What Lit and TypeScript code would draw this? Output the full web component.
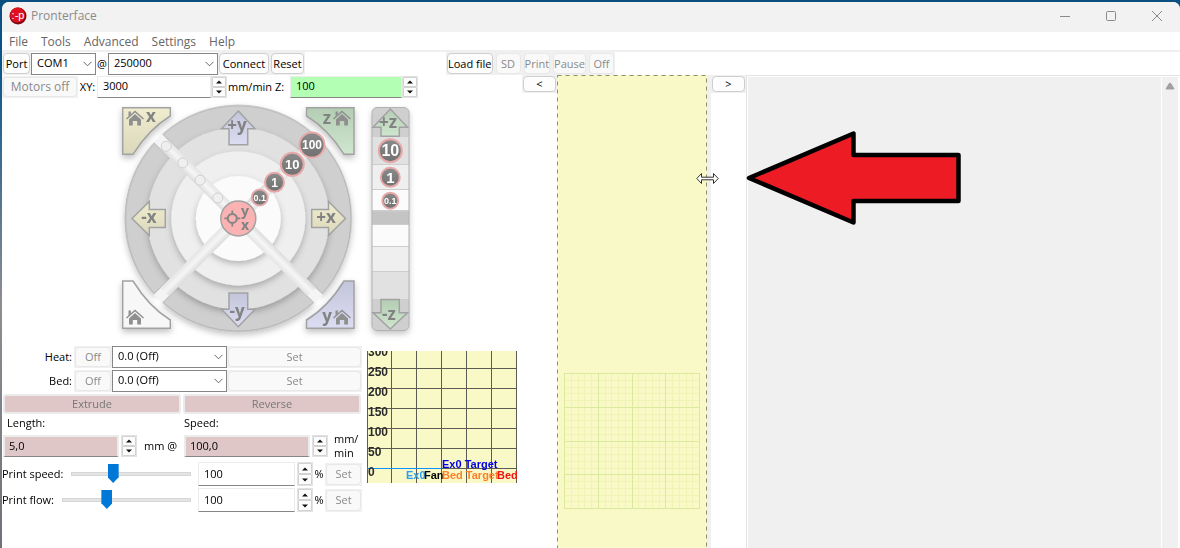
import { LitElement, html, svg, css } from "lit";
import { customElement, property } from "lit/decorators.js";

const controls = css`
  * { box-sizing: border-box; }
  button, input, select { font: inherit; color: inherit; margin: 0; outline: none; }
  button {
    padding: 0; border: 1px solid #cfcfcf; border-radius: 4px;
    background: #fdfdfd; white-space: nowrap;
  }
  button:disabled { color: #8a8a8a; background: #f9f9f9; border-color: #e8e8e8; }
`;

@customElement("pf-combo")
class PfCombo extends LitElement {
  @property() value = "";
  @property() label = "";
  static styles = [controls, css`
    :host { display: grid; height: 22px; }
    select {
      grid-area: 1 / 1; appearance: none; width: 100%; height: 100%; padding: 0 20px 2px 5px;
      border: 1px solid #868686; border-radius: 0; background: #fff; color: #000;
    }
    svg { grid-area: 1 / 1; justify-self: end; align-self: center; margin-right: 4px; pointer-events: none; }
  `];
  render() {
    return html`<select aria-label=${this.label}><option>${this.value}</option></select>
      <svg width="9" height="6" viewBox="0 0 9 6"><path d="M.5 .8 4.5 4.8 8.5 .8" fill="none" stroke="#666"/></svg>`;
  }
}

@customElement("pf-spin")
class PfSpin extends LitElement {
  @property() value = "";
  @property() label = "";
  @property() tone = "plain";
  static styles = [controls, css`
    :host { display: flex; height: 22px; }
    input {
      flex: 1; min-width: 0; height: 100%; padding: 0 5px 2px; border: 1px solid #ececec;
      border-bottom-color: #868686; border-radius: 0; background: #fff; color: #000;
    }
    .green { background: #b3ffb3; }
    .rose { background: #dfc7c7; border-width: 2px; border-bottom-width: 1px; padding-left: 4px; }
    .arrows { display: flex; flex-direction: column; width: 16px; background: #f0f0f0; border: 1px solid #e2e2e2; }
    .gap { margin-left: 2px; }
    button { flex: 1; display: flex; align-items: center; justify-content: center; border-radius: 1px; border-color: #d2d2d2; min-height: 0; }
  `];
  render() {
    return html`<input class=${this.tone} aria-label=${this.label} .value=${this.value}>
      <div class="arrows ${this.tone === "rose" || this.tone === "spaced" ? "gap" : ""}">
        <button aria-label="Increase"><svg width="6" height="4"><path d="M0 3.5 3 .5 6 3.5Z" fill="#111"/></svg></button>
        <button aria-label="Decrease"><svg width="6" height="4"><path d="M0 .5 3 3.5 6 .5Z" fill="#111"/></svg></button>
      </div>`;
  }
}

const CX = 238.3, CY = 218.4;

/** Point at radius r, set off by g from the upper diagonal on the side sx. */
function corner(r: number, g: number, sx: number) {
  const along = Math.sqrt(r * r - g * g);
  const k = Math.SQRT1_2;
  return `${(sx * (along - g) * k).toFixed(2)} ${(-(along + g) * k).toFixed(2)}`;
}
function ringSegment(inner: number, outer: number, g: number) {
  return `M${corner(outer, g, -1)}A${outer} ${outer} 0 0 1 ${corner(outer, g, 1)}L${corner(inner, g, 1)}A${inner} ${inner} 0 0 0 ${corner(inner, g, -1)}Z`;
}

@customElement("pf-jog")
class PfJog extends LitElement {
  static styles = css`
    :host { display: block; }
    svg { display: block; }
    text { font-family: "Open Sans", "DejaVu Sans", sans-serif; font-weight: 700; fill: #828282; text-anchor: middle; }
    .num { font-family: "Liberation Sans", Arial, sans-serif; fill: #fff; }
  `;
  house(x: number, y: number) {
    return svg`<g transform="translate(${x} ${y})" fill="#8f8f8f">
      <path d="M-8.5 1 0-6.5 8.5 1" fill="none" stroke="#8f8f8f" stroke-width="1.5"/>
      <path d="M-6 1.4 0-4 6 1.4V7.5H2.2V3H-2.2V7.5H-6Z"/><path d="M-6.5-6.5h2.4v3l-2.4 2Z"/></g>`;
  }
  badge(x: number, y: number, r: number, t: string, size: number) {
    return svg`<circle cx=${x} cy=${y} r=${r} fill="url(#dark)" stroke="#e6a8a8" stroke-width="2"/>
      <text class="num" x=${x} y=${y + size * 0.36} font-size=${size}>${t}</text>`;
  }
  render() {
    const rings: [number, string][] = [[91, "#e1e1e1"], [67, "#efefef"], [42.5, "#fbfbfb"]];
    return html`<svg width="518" height="248" viewBox="2 98 518 248" role="img" aria-label="Movement controls">
      <defs>
        <filter id="sh" x="-20%" y="-20%" width="140%" height="150%"><feDropShadow dx="0" dy="3" stdDeviation="3" flood-color="#000" flood-opacity=".25"/></filter>
        <linearGradient id="bar" x1="0" x2="1"><stop offset="0" stop-color="#dcdcdc"/><stop offset=".5" stop-color="#f6f6f6"/><stop offset="1" stop-color="#e4e4e4"/></linearGradient>
        <linearGradient id="dark" x1="0" y1="0" x2="0" y2="1"><stop offset="0" stop-color="#8a8a8a"/><stop offset="1" stop-color="#717171"/></linearGradient>
        <linearGradient id="yel" x1="0" y1="0" x2="0" y2="1"><stop offset="0" stop-color="#f0edcf"/><stop offset="1" stop-color="#dad7bb"/></linearGradient>
        <linearGradient id="blu" x1="0" y1="1" x2="0" y2="0"><stop offset="0" stop-color="#dcddf2"/><stop offset="1" stop-color="#c3c5db"/></linearGradient>
        <linearGradient id="grn" x1="0" y1="0" x2="0" y2="1"><stop offset="0" stop-color="#b3cdb3"/><stop offset="1" stop-color="#cfe6cf"/></linearGradient>
        <clipPath id="zc"><rect x="372" y="107.500" width="37" height="223" rx="5"/></clipPath>
      </defs>
      <g filter="url(#sh)" stroke="#a2a2a2" stroke-width="1.5">
        <path fill="url(#yel)" d="M122.700 107.700H170.300V116Q149 129 133 154.300H122.700Z"/>
        <path fill="url(#grn)" d="M354 107.700H306.500V116Q328 129 344 154.300H354Z"/>
        <path fill="#f7f7f7" d="M122.700 328.300V281H133Q149 307 170.300 320V328.300Z"/>
        <path fill="url(#blu)" d="M354 328.300V281H344Q328 307 306.500 320V328.300Z"/>
      </g>
      <g transform="translate(${CX} ${CY})">
        <g filter="url(#sh)">${[0, 90, 180, 270].map((a) => svg`<path transform="rotate(${a})" d=${ringSegment(90, 113, 6)} fill="#cfcfcf" stroke="#a6a6a6"/>`)}</g>
        ${rings.map(([r, c]) => svg`<circle r=${r} fill=${c} filter="url(#sh)"/>`)}
        ${[45, 135, 225, 315].map((a) => svg`<g transform="rotate(${a})">
          <rect x="-5.500" y="-114" width="11" height="24" fill="#f4f4f4"/>
          <rect x="-6" y="-104" width="12" height="88" fill="url(#bar)"/></g>`)}
        ${[102, 78.5, 54, 29].map((d) => svg`<circle cx=${-d * 0.7071} cy=${-d * 0.7071} r="5" fill="#efefef" stroke="#d0d0d0"/>`)}
        <circle r="17.500" fill="#fab2b2" stroke="#a2a2a2" stroke-width="1.500"/>
        <circle cx="-6" cy="0" r="4.500" fill="none" stroke="#858585" stroke-width="2"/>
        <path d="M-6-8v4M-6 4v4M-14 0h4M-2 0h4" stroke="#858585" stroke-width="1.700"/>
      </g>
      <text x="245" y="216" font-size="14">y</text><text x="245" y="230" font-size="14">x</text>
      <g stroke="#a2a2a2" stroke-width="1.500">
        <path fill="url(#blu)" d="M238.300 111 255 128.700H247.700V144.700H229V128.700H221.500Z"/>
        <path fill="url(#blu)" d="M238.300 326.700 255 309.300H247.700V293H229V309.300H221.500Z"/>
        <path fill="url(#yel)" d="M132 218.500 149.300 201.500V209.500H165.300V227.500H149.300V235.500Z"/>
        <path fill="url(#yel)" d="M345.500 218.500 328.500 201.500V209.500H311.700V227.500H328.500V235.500Z"/>
      </g>
      <g font-size="17">
        <text x="237" y="131">+y</text><text x="237" y="317">-y</text>
        <text x="149" y="223">-x</text><text x="326" y="223">+x</text>
        <text x="151" y="122">x</text><text x="327" y="124">z</text><text x="327" y="322">y</text>
      </g>
      ${this.house(135, 118)}${this.house(342, 118)}${this.house(135, 317)}${this.house(342, 317)}
      ${this.badge(259.7, 197.5, 8, "0.1", 9)}
      ${this.badge(274.5, 182.3, 9.5, "1", 12)}
      ${this.badge(292.3, 164.3, 11.5, "10", 13)}
      ${this.badge(312, 145, 12.5, "100", 12)}
      <rect x="372" y="107.500" width="37" height="223" rx="5" fill="#cfcfcf" filter="url(#sh)"/>
      <g clip-path="url(#zc)" stroke="#cdcdcd">
        <rect x="371" y="136.500" width="39" height="28" fill="#e1e1e1"/>
        <rect x="371" y="164.500" width="39" height="25" fill="#efefef"/>
        <rect x="371" y="189.500" width="39" height="21" fill="#fbfbfb"/>
        <rect x="371" y="211" width="39" height="13.500" fill="#c4c4c4"/>
        <rect x="371" y="224.500" width="39" height="22" fill="#fbfbfb"/>
        <rect x="371" y="246.500" width="39" height="25" fill="#efefef"/>
        <rect x="371" y="271.500" width="39" height="28" fill="#e1e1e1"/>
      </g>
      <rect x="372" y="107.500" width="37" height="223" rx="5" fill="none" stroke="#b2b2b2"/>
      <g stroke="#a2a2a2" stroke-width="1.500" fill="url(#grn)">
        <path d="M390.300 109 407.500 127.300H399.300V136.300H381V127.300H373Z"/>
        <path d="M390.300 329 407.500 312.700H399.300V299.500H381V312.700H373Z"/>
      </g>
      <text x="388" y="128" font-size="17">+z</text><text x="389" y="320" font-size="17">-z</text>
      ${this.badge(390.3, 150.7, 11.5, "10", 16)}
      ${this.badge(390.3, 177.3, 9.5, "1", 15)}
      ${this.badge(390.3, 200.7, 8, "0.1", 9)}
    </svg>`;
  }
}

@customElement("pf-graph")
class PfGraph extends LitElement {
  static styles = css`
    :host { display: block; }
    svg { display: block; }
    text { font-family: "Liberation Sans", Arial, sans-serif; font-weight: 700; }
    .axis { font-size: 12px; fill: #2c2c2c; }
    .key { font-size: 11px; }
  `;
  render() {
    return html`<svg width="150" height="132" viewBox="0 0 150 132" role="img" aria-label="Temperature graph">
      <rect width="150" height="132" fill="#f9f9c8"/>
      <g stroke="#5c5c54">
        ${[0.5, 24.5, 49.5, 74.5, 99.5, 124.5, 149.5].map((x) => svg`<path d="M${x} 0V132"/>`)}
        ${[17.5, 37.5, 57.5, 77.5, 97.5, 117.5].map((y) => svg`<path d="M0 ${y}H150"/>`)}
      </g>
      <path d="M0 117.500H74" stroke="#0e90ff"/>
      ${[300, 250, 200, 150, 100, 50, 0].map((t, i) => svg`<text class="axis" x="1" y=${5 + i * 20}>${t}</text>`)}
      <g class="key">
        <text x="75" y="117" fill="#0000e6">Ex0 Target</text>
        <text x="39" y="128" fill="#2a9df4">Ex0</text><text x="57" y="128">Fan</text>
        <text x="75" y="128" fill="#ff7f27">Bed Target</text><text x="130" y="128" fill="#f01414">Bed</text>
      </g>
    </svg>`;
  }
}

@customElement("app-root")
class AppRoot extends LitElement {
  static styles = [controls, css`
    :host {
      display: block; height: 100vh; overflow: hidden; position: relative; padding: 2px 0 0 2px;
      background: linear-gradient(#0b4f80, #0a568c 12%, #8d8d92 55%, #707078);
      font: 11px/14px "Open Sans", "Noto Sans", sans-serif; color: #000;
    }
    .window { height: 100%; display: flex; flex-direction: column; background: #fff; border-radius: 7px 7px 0 0; overflow: hidden; }
    .title { display: flex; align-items: center; height: 30px; padding: 0 17px 2px 7px; background: #f2f2f2; color: #8a8a8a; font-size: 12px; flex: none; }
    .title .name { flex: 1; margin-left: 4px; }
    .title button { width: 12px; height: 12px; border: 0; background: none; display: flex; margin-left: 34px; }
    .menu { display: flex; gap: 13px; height: 20px; padding: 1px 7px 0; border-bottom: 2px solid #efefef; font-size: 12px; line-height: 18px; color: #666; flex: none; }
    .menu a { color: inherit; text-decoration: none; }
    .tools { display: flex; align-items: center; height: 23px; flex: none; }
    .tools .cell, .cell { background: #f0f0f0; padding: 1px; display: flex; }
    .tools button { height: 21px; }
    .port { width: 27px; } .p-com { width: 65px; } .at { width: 12px; text-align: center; }
    .p-baud { width: 110px; } .connect { width: 50px; } .reset { width: 33px; }
    .job { gap: 3px; margin-left: 141px; }
    .load { width: 50px; } .sd { width: 19px; } .print { width: 29px; } .pause { width: 35px; } .off { width: 22px; }
    .main { flex: 1; min-height: 0; display: flex; }
    .left { width: 520px; flex: none; }
    .feed { display: flex; align-items: center; height: 23px; }
    .feed button { height: 20px; width: 74px; font-size: 12px; }
    .feed .xy { width: 19px; text-align: center; }
    .feed .xyv { width: 130px; } .feed .mm { width: 63px; padding-left: 1px; } .feed .zv { width: 128px; }
    .lower { display: flex; align-items: flex-start; padding-right: 5px; }
    .settings { width: 360px; }
    .temp { display: grid; grid-template-columns: 72px 38px 115px 135px; row-gap: 2px; text-align: right; align-items: center; }
    .temp .lab { padding-right: 2px; }
    .temp pf-combo { text-align: left; }
    .temp .cell { height: 22px; }
    .cell button { flex: 1; }
    .pair { display: flex; gap: 2px; margin: 2px 1px 0 1px; }
    .pair button { flex: 1; height: 20px; border: 2px solid #ebebeb; border-radius: 3px; background: #dfc7c7; color: #777; }
    .heads { display: grid; grid-template-columns: 177px 1fr; padding: 2px 0 0 5px; height: 18px; }
    .ext { display: flex; align-items: center; height: 28px; padding-left: 1px; }
    .ext .len { width: 134px; } .ext .by { width: 47px; text-align: center; } .ext .spd { width: 144px; }
    .ext .unit { width: 28px; margin-left: 6px; }
    .slide { display: flex; align-items: center; height: 24px; margin-top: 2px; }
    .slide label { flex: none; margin-right: 8px; }
    .slide input { flex: 1; min-width: 0; height: 20px; appearance: none; background: none; }
    .slide input::-webkit-slider-runnable-track { height: 4px; background: #e4e6e6; border: 1px solid #d6d6d6; }
    .slide input::-webkit-slider-thumb {
      appearance: none; width: 11px; height: 19px; margin-top: -9px; background: #0078d7;
      clip-path: polygon(0 0, 100% 0, 100% 70%, 50% 100%, 0 70%);
    }
    .slide pf-spin { width: 115px; height: 24px; margin-left: 7px; }
    .slide .pct { width: 12px; text-align: center; }
    .slide .cell { width: 37px; height: 23px; }
    .lower pf-graph { margin: 5px 0 0 5px; }
    .side { width: 35px; flex: none; }
    .side .cell { height: 18px; }
    .preview { width: 150px; flex: none; padding: 298px 0 0 7px; background: #f9f9c8; position: relative; overflow: hidden; }
    .frame { position: absolute; inset: 0; width: 100%; height: 100%; }
    .sash { width: 4px; background: #f0f0f0; flex: none; }
    .log { flex: 1; min-width: 0; display: flex; border: solid #e4e4e4; border-width: 1px 0 0 1px; padding: 1px 0 0 1px; }
    .log textarea { flex: 1; min-width: 0; border: 0; resize: none; background: #f0f0f0; outline: none; }
    .scroll { width: 19px; border: solid #fff; border-width: 0 2px 0 1px; background: #f0f0f0; text-align: center; padding-top: 2px; }
    .pointer { position: absolute; left: 696px; top: 172px; }
    .callout { position: absolute; left: 744px; top: 128px; }
  `];
  grid() {
    const at = [0, 1, 2, 3, 4].map((i) => Math.round(i * 33.8) + 0.5);
    const minor = Array.from({ length: 21 }, (_, i) => Math.round(i * 6.76) + 0.5);
    return html`<svg width="136" height="136" viewBox="0 0 136 136">
      <g stroke="#eff3b4">${minor.map((p) => svg`<path d="M${p} 0V136M0 ${p}H136"/>`)}</g>
      <g stroke="#dae99c">${at.map((p) => svg`<path d="M${p} 0V136M0 ${p}H136"/>`)}</g></svg>`;
  }
  slider(id: string, label: string) {
    return html`<div class="slide"><label for=${id}>${label}</label>
      <input id=${id} type="range" min="1" max="300" value="100">
      <pf-spin tone="spaced" value="100" label=${label}></pf-spin><span class="pct">%</span>
      <div class="cell"><button disabled>Set</button></div></div>`;
  }
  temp(label: string) {
    return html`<span class="lab">${label}</span><div class="cell"><button disabled>Off</button></div>
      <pf-combo value="0.0 (Off)" label=${label}></pf-combo><div class="cell"><button disabled>Set</button></div>`;
  }
  render() {
    return html`
      <div class="window">
        <header class="title">
          <svg width="18" height="18" viewBox="0 0 18 18"><circle cx="9" cy="9" r="8.500" fill="#7d0a12"/><circle cx="8.500" cy="8" r="7.500" fill="#e0111e"/>
            <text x="9" y="12" text-anchor="middle" font-size="11" font-family="Liberation Sans, sans-serif" fill="#fff">:-p</text></svg>
          <span class="name">Pronterface</span>
          <button aria-label="Minimize"><svg width="12" height="12"><path d="M1 6.500H11" stroke="#8a8a8a"/></svg></button>
          <button aria-label="Maximize"><svg width="12" height="12"><rect x="1.500" y="1.500" width="9" height="9" rx="1" fill="none" stroke="#8a8a8a"/></svg></button>
          <button aria-label="Close"><svg width="12" height="12"><path d="M1 1 11 11M11 1 1 11" stroke="#8a8a8a"/></svg></button>
        </header>
        <nav class="menu">${["File", "Tools", "Advanced", "Settings", "Help"].map((m) => html`<a href="#">${m}</a>`)}</nav>
        <div class="tools">
          <div class="cell"><button class="port">Port</button></div>
          <pf-combo class="p-com" value="COM1" label="Port"></pf-combo><span class="at">@</span>
          <pf-combo class="p-baud" value="250000" label="Baud rate"></pf-combo>
          <div class="cell"><button class="connect">Connect</button></div>
          <div class="cell"><button class="reset">Reset</button></div>
          <div class="cell job"><button class="load">Load file</button><button class="sd" disabled>SD</button>
            <button class="print" disabled>Print</button><button class="pause" disabled>Pause</button><button class="off" disabled>Off</button></div>
        </div>
        <div class="main">
          <section class="left">
            <div class="feed">
              <div class="cell"><button disabled>Motors off</button></div>
              <span class="xy">XY:</span><pf-spin class="xyv" value="3000" label="XY feed rate"></pf-spin>
              <span class="mm">mm/min Z:</span><pf-spin class="zv" tone="green" value="100" label="Z feed rate"></pf-spin>
            </div>
            <pf-jog></pf-jog>
            <div class="lower">
              <div class="settings">
                <div class="temp">${this.temp("Heat:")}${this.temp("Bed:")}</div>
                <div class="pair"><button disabled>Extrude</button><button disabled>Reverse</button></div>
                <div class="heads"><span>Length:</span><span>Speed:</span></div>
                <div class="ext"><pf-spin class="len" tone="rose" value="5,0" label="Length"></pf-spin><span class="by">mm @</span>
                  <pf-spin class="spd" tone="rose" value="100,0" label="Speed"></pf-spin><span class="unit">mm/<br>min</span></div>
                ${this.slider("speed", "Print speed:")}${this.slider("flow", "Print flow:")}
              </div>
              <pf-graph></pf-graph>
            </div>
          </section>
          <div class="side"><div class="cell"><button>&lt;</button></div></div>
          <div class="preview">${this.grid()}
            <svg class="frame"><rect x=".5" y=".5" width="149" height="900" fill="none" stroke="#8f8f70" stroke-dasharray="4 4"/></svg></div>
          <div class="sash"></div>
          <div class="side"><div class="cell"><button>&gt;</button></div></div>
          <div class="log"><textarea readonly aria-label="Console"></textarea>
            <div class="scroll"><svg width="10" height="8"><path d="M1 7 4.200 1.500Q5 .5 5.800 1.500L9 7Z" fill="#a0a0a0" stroke="#a0a0a0"/></svg></div></div>
        </div>
      </div>
      <svg class="pointer" width="23" height="13" viewBox="0 0 23 13"><path d="M.8 6.500 5.500 1.500V5.200H17.500V1.500L22.200 6.500 17.500 11.500V7.800H5.500V11.500Z" fill="#fff" stroke="#333"/></svg>
      <svg class="callout" width="220" height="100" viewBox="0 0 220 100"><path d="M5 50 109.500 5.500V27H214.500V73H109.500V94.500Z" fill="#ed1c24" stroke="#000" stroke-width="4.500" stroke-linejoin="round"/></svg>`;
  }
}
